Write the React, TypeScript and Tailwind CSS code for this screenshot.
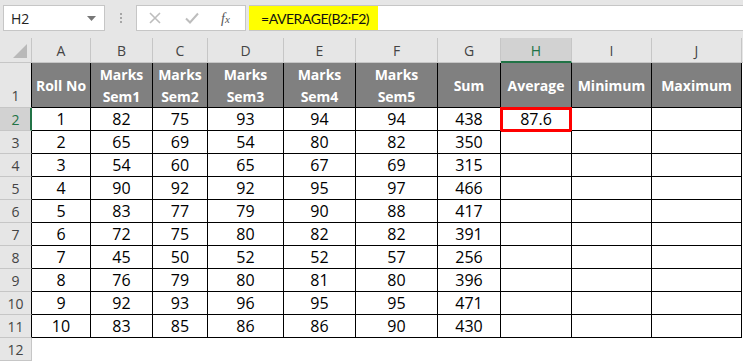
import type { ReactNode } from "react";

const colWidths = ["w-[59px]", "w-[62px]", "w-[55px]", "w-[76px]", "w-[72px]", "w-[82px]", "w-[63px]", "w-[71px]", "w-[80px]", "w-[90px]"];
const letters = ["A", "B", "C", "D", "E", "F", "G", "H", "I", "J"];
const headers: ReactNode[] = [
  "Roll No",
  <>Marks<br />Sem1</>,
  <>Marks<br />Sem2</>,
  <>Marks<br />Sem3</>,
  <>Marks<br />Sem4</>,
  <>Marks<br />Sem5</>,
  "Sum",
  "Average",
  "Minimum",
  "Maximum",
];

const rows = [
  [1, 82, 75, 93, 94, 94, 438],
  [2, 65, 69, 54, 80, 82, 350],
  [3, 54, 60, 65, 67, 69, 315],
  [4, 90, 92, 92, 95, 97, 466],
  [5, 83, 77, 79, 90, 88, 417],
  [6, 72, 75, 80, 82, 82, 391],
  [7, 45, 50, 52, 52, 57, 256],
  [8, 76, 79, 80, 81, 80, 396],
  [9, 92, 93, 96, 95, 95, 471],
  [10, 83, 85, 86, 86, 90, 430],
];

const font = "font-['Open_Sans','Lato',sans-serif]";

function FormulaBar() {
  return (
    <div className="flex h-[38px] items-start bg-[#e6e6e6] pt-[5px]">
      <div className="ml-[3px] flex h-[26px] w-[102px] items-center justify-between border border-[#c6c6c6] bg-white pl-[7px] pr-[8px]">
        <span className="text-[14px] text-[#222]">H2</span>
        <svg width="9" height="5" viewBox="0 0 9 5"><path d="M0 0h9L4.5 5z" fill="#777" /></svg>
      </div>
      <div className="flex h-[26px] w-[31px] flex-col items-center justify-center gap-[2px]">
        <span className="h-[2px] w-[2px] bg-[#a6a6a6]" />
        <span className="h-[2px] w-[2px] bg-[#a6a6a6]" />
        <span className="h-[2px] w-[2px] bg-[#a6a6a6]" />
      </div>
      <div className="flex h-[26px] w-[110px] items-center border border-[#c6c6c6] bg-white">
        <svg className="ml-[12px]" width="12" height="12" viewBox="0 0 12 12">
          <path d="M1 1l10 10M11 1L1 11" stroke="#bdbdbd" strokeWidth="1.6" />
        </svg>
        <svg className="ml-[24px]" width="14" height="12" viewBox="0 0 14 12">
          <path d="M1 6.5l4 4L13 1.5" stroke="#bdbdbd" strokeWidth="2" fill="none" />
        </svg>
        <span className="ml-[22px] font-['Liberation_Serif',serif] text-[14px] italic text-[#555]">
          f<span className="text-[11px]">x</span>
        </span>
      </div>
      <div className="ml-[3px] flex h-[26px] flex-1 border-y border-[#c6c6c6] bg-white">
        <div className="flex w-[129px] items-center bg-[#ffff00] pl-[12px] font-['Lato',sans-serif] text-[14px] tracking-[-0.45px] text-[#111]">
          =AVERAGE(B2:F2)
        </div>
      </div>
    </div>
  );
}

function ColumnHeaders() {
  return (
    <div className="flex h-[25px] bg-[#e6e6e6] text-[14px] text-[#444]">
      <div className="relative h-full w-[32px] shrink-0 border-r border-b border-[#c6c6c6]">
        <svg className="absolute right-[4px] bottom-[4px]" width="14" height="14" viewBox="0 0 14 14">
          <path d="M14 0V14H0z" fill="#b9b9b9" />
        </svg>
      </div>
      {letters.map((l, i) =>
        l === "H" ? (
          <div key={l} className={`${colWidths[i]} flex shrink-0 items-center justify-center border-r border-b-2 border-r-[#c6c6c6] border-b-[#217346] bg-[#d2d2d2] pt-[2px] text-[#217346]`}>
            {l}
          </div>
        ) : (
          <div key={l} className={`${colWidths[i]} flex shrink-0 items-center justify-center border-r border-b border-[#c6c6c6] pt-[1px]`}>
            {l}
          </div>
        )
      )}
      <div className="flex-1 border-b border-[#c6c6c6]" />
    </div>
  );
}

export default function App() {
  return (
    <div className={`h-[363px] w-[743px] overflow-hidden bg-white ${font}`}>
      <FormulaBar />
      <ColumnHeaders />
      {/* row 1: headers */}
      <div className="flex h-[45px]">
        <div className="flex w-[32px] shrink-0 items-end justify-center border-r border-b border-r-black border-b-[#c6c6c6] bg-[#e6e6e6] pb-[1px] text-[14px] text-[#444]">
          1
        </div>
        {headers.map((h, i) => (
          <div key={i} className={`${colWidths[i]} flex shrink-0 items-center justify-center border-r border-b border-black bg-[#808080] pt-[2px] text-center text-[14px] leading-[22px] font-bold text-white`}>
            <span>{h}</span>
          </div>
        ))}
        <div className="flex-1" />
      </div>
      {rows.map((r, ri) => {
        const sel = ri === 0;
        return (
          <div key={ri} className="flex h-[23px]">
            <div
              className={
                sel
                  ? "flex w-[32px] shrink-0 items-center justify-center border-r-2 border-b border-r-[#217346] border-b-[#c6c6c6] bg-[#d2d2d2] pl-[1px] text-[14px] text-[#217346]"
                  : "flex w-[32px] shrink-0 items-center justify-center border-r border-b border-r-black border-b-[#c6c6c6] bg-[#e6e6e6] text-[14px] text-[#444]"
              }
            >
              {ri + 2}
            </div>
            {colWidths.map((w, ci) => {
              const v = ci < 7 ? r[ci] : sel && ci === 7 ? "87.6" : "";
              return (
                <div key={ci} className={`${w} relative flex shrink-0 items-center justify-center border-r border-b border-black text-[16px] text-black`}>
                  {v}
                  {sel && ci === 7 && (
                    <div className="pointer-events-none absolute top-[-1px] right-[-1px] bottom-[-2px] left-[-1px] border-[3px] border-[#ff0000]" />
                  )}
                </div>
              );
            })}
            <div className="flex-1" />
          </div>
        );
      })}
      <div className="flex h-[23px]">
        <div className="flex w-[32px] shrink-0 items-center justify-center border-r border-b border-[#c6c6c6] bg-[#e6e6e6] text-[14px] text-[#444]">
          12
        </div>
        <div className="flex-1" />
      </div>
    </div>
  );
}
